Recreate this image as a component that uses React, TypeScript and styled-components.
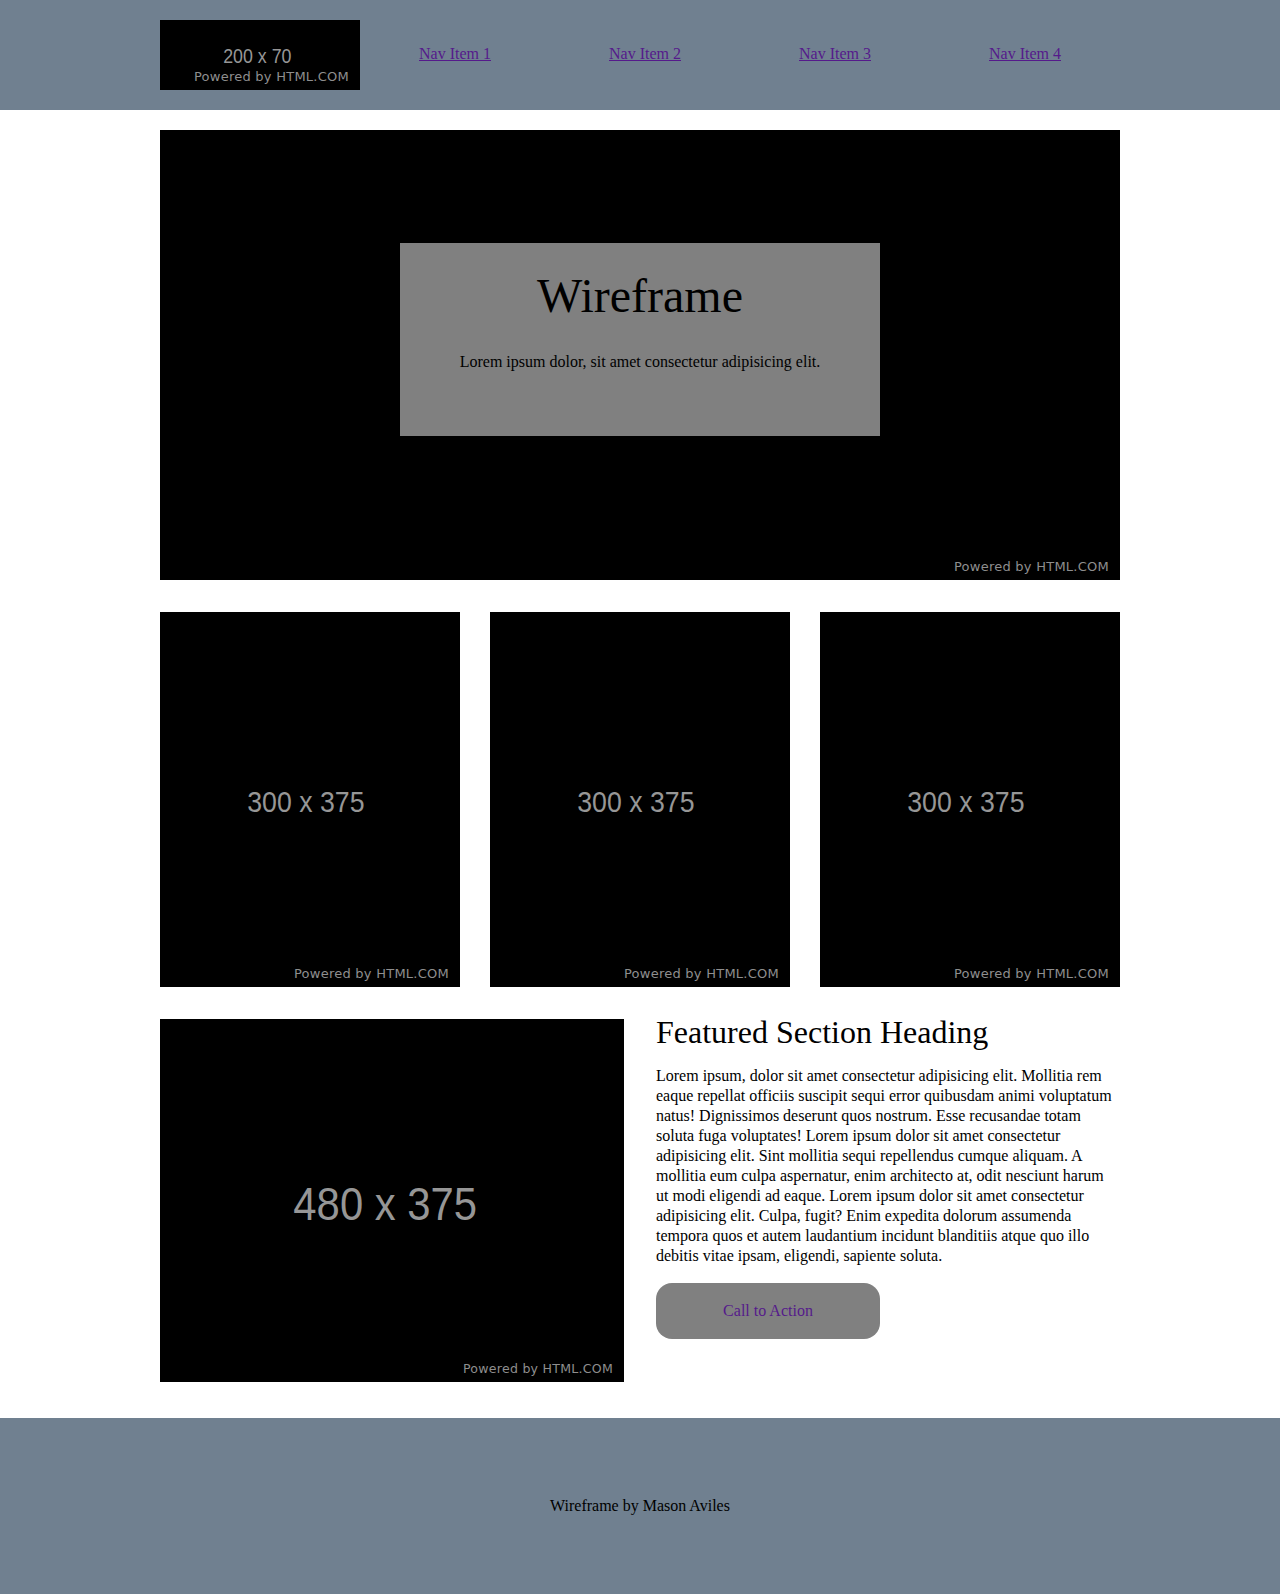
import styled, { createGlobalStyle } from 'styled-components';

const GlobalStyle = createGlobalStyle`
  body {
    margin: 0;
    font-family: "Liberation Serif", "Times New Roman", serif;
    font-size: 16px;
    color: #000;
    background: #fff;
  }
`;

const elements = {
  header: styled.header`
    background: #708090;
    padding: 20px 0;
  `,
  headerInner: styled.div`
    width: 960px;
    margin: 0 auto;
    display: flex;
    align-items: center;
  `,
  nav: styled.nav`
    flex: 1;
    display: grid;
    grid-template-columns: repeat(4, 1fr);
    margin-top: -2px;
  `,
  navLink: styled.a`
    text-align: center;
    color: #551a8b;
    text-decoration: underline;
  `,
  main: styled.main`
    width: 960px;
    margin: 20px auto 0;
    display: flex;
    flex-direction: column;
    gap: 32px;
  `,
  hero: styled.section`
    display: grid;

    & > * {
      grid-area: 1 / 1;
    }
  `,
  heroCard: styled.div`
    align-self: start;
    justify-self: center;
    width: 480px;
    margin-top: 113px;
    padding: 25px 0 65px;
    background: #808080;
    text-align: center;

    h1 {
      margin: 0;
      font-size: 48px;
      font-weight: normal;
      line-height: normal;
    }

    p {
      margin: 30px 0 0;
    }
  `,
  cards: styled.section`
    display: grid;
    grid-template-columns: repeat(3, 1fr);
    gap: 30px;
  `,
  featured: styled.section`
    display: grid;
    grid-template-columns: 1fr 1fr;
    gap: 32px;
  `,
  featuredText: styled.div`
    margin-top: -5px;

    h2 {
      margin: 0;
      font-size: 32px;
      font-weight: normal;
      line-height: normal;
    }

    p {
      margin: 15px 0 0;
      line-height: 20px;
    }
  `,
  cta: styled.a`
    display: flex;
    align-items: center;
    justify-content: center;
    width: 224px;
    height: 56px;
    margin-top: 17px;
    border-radius: 16px;
    background: #808080;
    color: #551a8b;
    text-decoration: none;
  `,
  footer: styled.footer`
    margin-top: 36px;
    height: 176px;
    background: #708090;
    display: flex;
    align-items: center;
    justify-content: center;
  `,
};

// black stand-in picture with size label and credit line
const Placeholder = styled.div<{ $height: number; $width?: number }>`
  display: grid;
  flex-shrink: 0;
  width: ${(p) => (p.$width ? `${p.$width}px` : '100%')};
  height: ${(p) => p.$height}px;
  background: #000;

  & > * {
    grid-area: 1 / 1;
  }
`;

const SizeLabel = styled.span<{ $size: number }>`
  place-self: center;
  margin: ${(p) => Math.round(p.$size * 0.12)}px ${(p) => Math.round(p.$size * 0.28)}px 0 0;
  font-family: "Liberation Sans", Arial, sans-serif;
  font-size: ${(p) => p.$size}px;
  line-height: 1;
  color: #969696;
  transform: scaleX(0.89);
`;

const Credit = styled.span<{ $scale: number }>`
  place-self: end;
  margin: 0 11px 6px 0;
  font-family: "DejaVu Sans", Verdana, sans-serif;
  font-size: ${(p) => 13 * p.$scale}px;
  letter-spacing: 0.25px;
  line-height: 15px;
  color: #8e8e8e;
`;

interface ImageProps {
  label?: string;
  size?: number;
  height: number;
  width?: number;
  scale?: number;
}

function Image({ label, size = 30, height, width, scale = 1 }: ImageProps): JSX.Element {
  return (
    <Placeholder $height={height} $width={width}>
      {label && <SizeLabel $size={size}>{label}</SizeLabel>}
      <Credit $scale={scale}>Powered by HTML.COM</Credit>
    </Placeholder>
  );
}

const navItems = ['Nav Item 1', 'Nav Item 2', 'Nav Item 3', 'Nav Item 4'];

export default function App(): JSX.Element {
  return (
    <>
      <GlobalStyle />
      <elements.header>
        <elements.headerInner>
          <Image label="200 x 70" size={20} height={70} width={200} />
          <elements.nav>
            {navItems.map((item) => (
              <elements.navLink key={item} href="#">
                {item}
              </elements.navLink>
            ))}
          </elements.nav>
        </elements.headerInner>
      </elements.header>

      <elements.main>
        <elements.hero>
          <Image height={450} />
          <elements.heroCard>
            <h1>Wireframe</h1>
            <p>Lorem ipsum dolor, sit amet consectetur adipisicing elit.</p>
          </elements.heroCard>
        </elements.hero>

        <elements.cards>
          <Image label="300 x 375" height={375} />
          <Image label="300 x 375" height={375} />
          <Image label="300 x 375" height={375} />
        </elements.cards>

        <elements.featured>
          <Image label="480 x 375" size={47} height={363} scale={0.967} />
          <elements.featuredText>
            <h2>Featured Section Heading</h2>
            <p>
              Lorem ipsum, dolor sit amet consectetur adipisicing elit. Mollitia rem eaque repellat
              officiis suscipit sequi error quibusdam animi voluptatum natus! Dignissimos deserunt
              quos nostrum. Esse recusandae totam soluta fuga voluptates! Lorem ipsum dolor sit amet
              consectetur adipisicing elit. Sint mollitia sequi repellendus cumque aliquam. A
              mollitia eum culpa aspernatur, enim architecto at, odit nesciunt harum ut modi
              eligendi ad eaque. Lorem ipsum dolor sit amet consectetur adipisicing elit. Culpa,
              fugit? Enim expedita dolorum assumenda tempora quos et autem laudantium incidunt
              blanditiis atque quo illo debitis vitae ipsam, eligendi, sapiente soluta.
            </p>
            <elements.cta href="#">Call to Action</elements.cta>
          </elements.featuredText>
        </elements.featured>
      </elements.main>

      <elements.footer>Wireframe by Mason Aviles</elements.footer>
    </>
  );
}
